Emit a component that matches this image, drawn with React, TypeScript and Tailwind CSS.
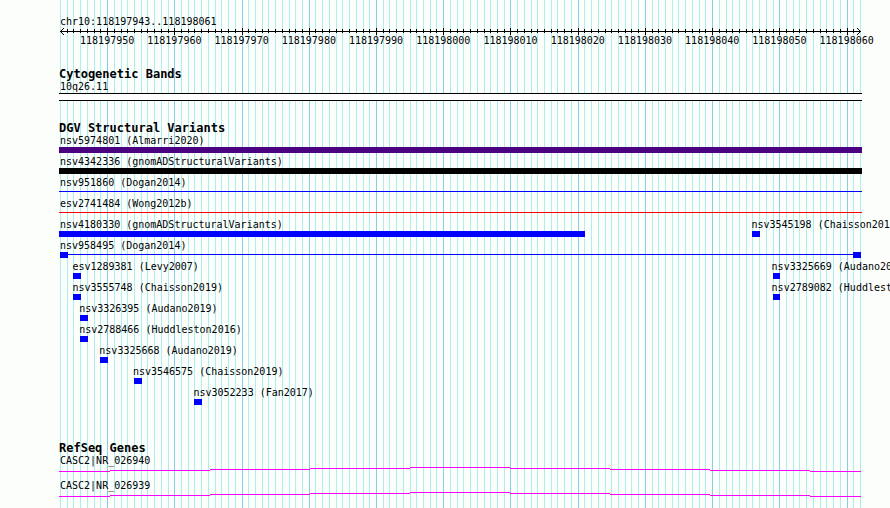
// Genome browser view: ruler, cytogenetic band, structural variants and genes

const START = 118197943;
const END = 118198062;
const SPAN = END - START;

type Feature = {
  name: string;
  start: number;
  end: number;
  shape?: 'box' | 'line' | 'ends';
  color?: string;
};

// One entry per row, features that do not collide share a row
const variantRows: Feature[][] = [
  [{ name: 'nsv5974801 (Almarri2020)', start: START, end: END, color: 'bg-[#4b0082]' }],
  [{ name: 'nsv4342336 (gnomADStructuralVariants)', start: START, end: END, color: 'bg-black' }],
  [{ name: 'nsv951860 (Dogan2014)', start: START, end: END, shape: 'line' }],
  [{ name: 'esv2741484 (Wong2012b)', start: START, end: END, shape: 'line', color: 'bg-[#ff0000]' }],
  [
    { name: 'nsv4180330 (gnomADStructuralVariants)', start: START, end: 118198021 },
    { name: 'nsv3545198 (Chaisson2019)', start: 118198046, end: 118198047 },
  ],
  [{ name: 'nsv958495 (Dogan2014)', start: START, end: END, shape: 'ends' }],
  [
    { name: 'esv1289381 (Levy2007)', start: 118197945, end: 118197946 },
    { name: 'nsv3325669 (Audano2019)', start: 118198049, end: 118198050 },
  ],
  [
    { name: 'nsv3555748 (Chaisson2019)', start: 118197945, end: 118197946 },
    { name: 'nsv2789082 (Huddleston2016)', start: 118198049, end: 118198050 },
  ],
  [{ name: 'nsv3326395 (Audano2019)', start: 118197946, end: 118197947 }],
  [{ name: 'nsv2788466 (Huddleston2016)', start: 118197946, end: 118197947 }],
  [{ name: 'nsv3325668 (Audano2019)', start: 118197949, end: 118197950 }],
  [{ name: 'nsv3546575 (Chaisson2019)', start: 118197954, end: 118197955 }],
  [{ name: 'nsv3052233 (Fan2017)', start: 118197963, end: 118197964 }],
];

const genes = ['CASC2|NR_026940', 'CASC2|NR_026939'];

const bases = Array.from({ length: SPAN + 1 }, (_, i) => START + i);
const majors = bases.filter((b) => b % 10 === 0);

const percent = (base: number) => ((base - START) / SPAN) * 100;

function Gridlines() {
  return (
    <div className="absolute inset-y-0 left-[60px] right-[30px] -z-10" aria-hidden="true">
      {bases.map((b) => (
        <div
          key={b}
          className={`absolute inset-y-0 w-px ${b % 10 === 0 ? 'bg-[#87ceeb]' : 'bg-[#afeeee]'}`}
          style={{ left: `${percent(b)}%` }}
        />
      ))}
    </div>
  );
}

function Ruler() {
  return (
    <section>
      <p>chr10:118197943..118198061</p>
      <div className="relative h-[7px]" aria-hidden="true">
        <div className="absolute inset-x-0 top-[3px] h-px bg-black" />
        {bases.slice(1, -1).map((b) => (
          <div
            key={b}
            className={`absolute w-px bg-black ${b % 10 === 0 ? 'top-0 h-[7px]' : 'top-px h-1'}`}
            style={{ left: `${percent(b)}%` }}
          />
        ))}
        <svg className="absolute left-0 top-0 h-[7px] w-1" viewBox="0 0 4 7" shapeRendering="crispEdges">
          <path d="M3 0h1v1h-1zM2 1h1v1h-1zM1 2h1v1h-1zM0 3h1v1h-1zM1 4h1v1h-1zM2 5h1v1h-1zM3 6h1v1h-1z" />
        </svg>
        <svg className="absolute -right-px top-0 h-[7px] w-1" viewBox="0 0 4 7" shapeRendering="crispEdges">
          <path d="M0 0h1v1h-1zM1 1h1v1h-1zM2 2h1v1h-1zM3 3h1v1h-1zM2 4h1v1h-1zM1 5h1v1h-1zM0 6h1v1h-1z" />
        </svg>
      </div>
      <div className="grid">
        {majors.map((b) => (
          <span key={b} className="col-start-1 row-start-1" style={{ marginLeft: `calc(${percent(b)}% - 27px)` }}>
            {b}
          </span>
        ))}
      </div>
    </section>
  );
}

function Glyph({ feature }: { feature: Feature }) {
  const { start, end, shape = 'box', color = 'bg-[#0000ff]' } = feature;
  const width = `calc(${percent(START + end - start)}% + 1px)`;

  if (shape === 'line') {
    return (
      <div className="-ml-px -mr-0.5 h-1.5 pt-0.5">
        <div className={`h-px ${color}`} />
      </div>
    );
  }
  if (shape === 'ends') {
    return (
      <div className="-mr-px flex h-1.5">
        <div className={`w-2 ${color}`} />
        <div className={`mt-0.5 h-px grow ${color}`} />
        <div className={`w-2 ${color}`} />
      </div>
    );
  }
  if (end === END) {
    return <div className={`-ml-px -mr-0.5 h-1.5 ${color}`} />;
  }
  return (
    <div className="grid">
      <div className={`col-start-1 row-start-1 h-1.5 ${color}`} style={{ marginLeft: `${percent(start)}%`, width }} />
      {start === START && <div className={`col-start-1 row-start-1 -ml-px h-1.5 w-px ${color}`} />}
    </div>
  );
}

function VariantRow({ features }: { features: Feature[] }) {
  return (
    <div className="grid">
      {features.map((f) => (
        <div key={f.name} className="col-start-1 row-start-1 min-w-0">
          <p style={{ marginLeft: f.start === START ? 0 : `calc(${percent(f.start)}% - 1px)` }}>{f.name}</p>
          <Glyph feature={f} />
        </div>
      ))}
    </div>
  );
}

function Gene({ name }: { name: string }) {
  return (
    <div>
      <p>{name}</p>
      <div className="-ml-px -mr-px">
        {/* Intron drawn as a shallow stepped hat */}
        <svg
          className="block h-[5px] w-full"
          viewBox="0 0 802 5"
          preserveAspectRatio="none"
          fill="#ff00ff"
          shapeRendering="crispEdges"
          aria-hidden="true"
        >
          <path d="M0 4h51v1H0zM51 3h100v1h-100zM151 2h100v1h-100zM251 1h100v1h-100zM351 0h100v1h-100zM451 1h100v1h-100zM551 2h100v1h-100zM651 3h100v1h-100zM751 4h51v1h-51z" />
        </svg>
      </div>
    </div>
  );
}

function TrackTitle({ children }: { children: string }) {
  return <h2 className="-ml-px text-[12px] font-bold leading-[14px]">{children}</h2>;
}

export default function App() {
  return (
    <main className="relative isolate min-h-screen overflow-hidden whitespace-nowrap bg-[#fcfefc] pb-2 pl-[60px] pr-[30px] pt-4 font-['DejaVu_Sans_Mono',monospace] text-[10px] leading-3 text-black">
      <Gridlines />
      <Ruler />

      <section className="pt-5">
        <TrackTitle>Cytogenetic Bands</TrackTitle>
        <p>10q26.11</p>
        <div className="-ml-px -mr-0.5 h-2 border-y border-black bg-white" />
      </section>

      <section className="pt-5">
        <TrackTitle>DGV Structural Variants</TrackTitle>
        <div className="grid gap-[3px]">
          {variantRows.map((row) => (
            <VariantRow key={row[0].name} features={row} />
          ))}
        </div>
      </section>

      <section className="pt-9">
        <TrackTitle>RefSeq Genes</TrackTitle>
        <div className="grid gap-2">
          {genes.map((g) => (
            <Gene key={g} name={g} />
          ))}
        </div>
      </section>
    </main>
  );
}
